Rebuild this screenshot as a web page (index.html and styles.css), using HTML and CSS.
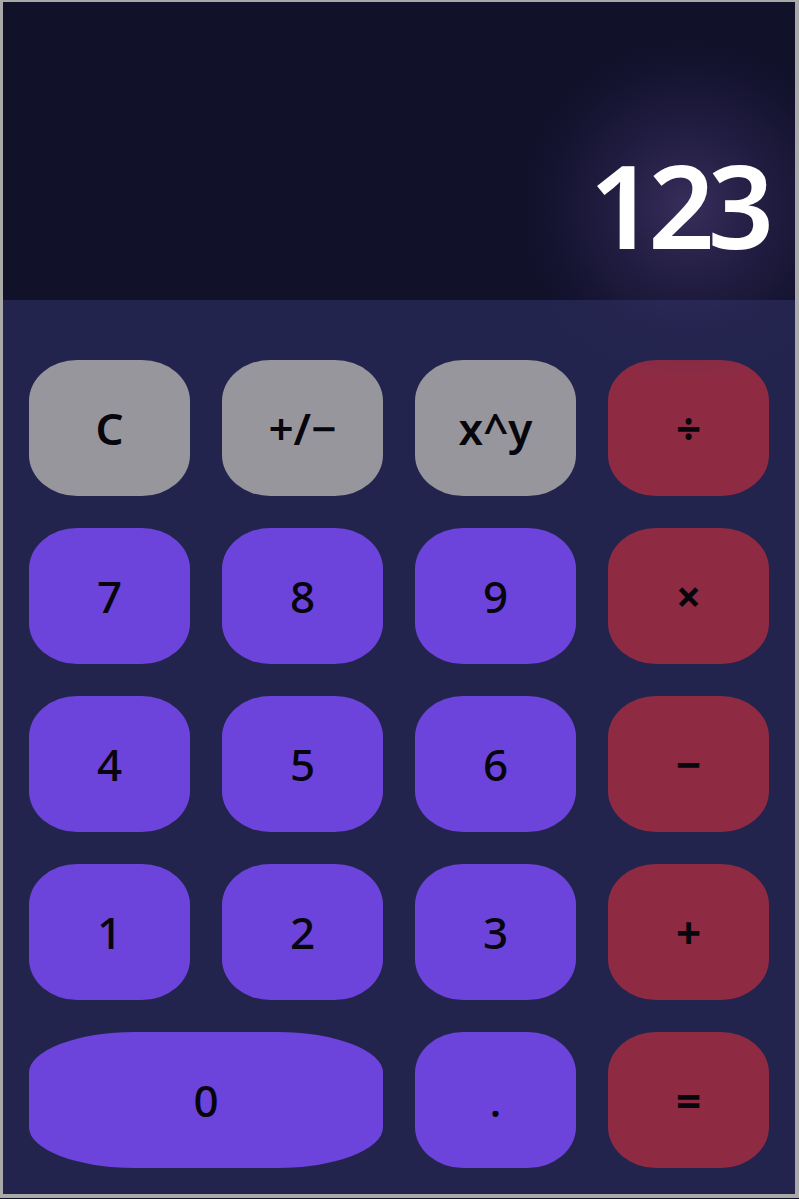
FILE: index.html
```html
<!DOCTYPE html>
<html lang="en">
<head>
<meta charset="utf-8">
<title>Calculator</title>
<link rel="stylesheet" href="styles.css">
</head>
<body>
<div class="app">
  <div class="display">
    <div class="glow"></div>
    <span class="value">123</span>
  </div>
  <div class="keypad">
    <button class="key fn">C</button>
    <button class="key fn">+/−</button>
    <button class="key fn">x^y</button>
    <button class="key op">÷</button>
    <button class="key num">7</button>
    <button class="key num">8</button>
    <button class="key num">9</button>
    <button class="key op">×</button>
    <button class="key num">4</button>
    <button class="key num">5</button>
    <button class="key num">6</button>
    <button class="key op">−</button>
    <button class="key num">1</button>
    <button class="key num">2</button>
    <button class="key num">3</button>
    <button class="key op">+</button>
    <button class="key num wide">0</button>
    <button class="key num">.</button>
    <button class="key op">=</button>
  </div>
</div>
</body>
</html>
```

FILE: styles.css
```css
html, body {
  margin: 0;
  padding: 0;
  background: #12112a;
}

.app {
  position: relative;
  width: 792px;
  border-style: solid;
  border-color: #a9a9a9;
  border-width: 2px 4px 4px 3px;
  font-family: "Noto Sans", "Open Sans", sans-serif;
  overflow: hidden;
}

.display {
  height: 298px;
  background: #12112a;
  display: flex;
  align-items: flex-end;
  justify-content: flex-end;
  padding: 0 28px 38px 0;
  box-sizing: border-box;
}

.glow {
  position: absolute;
  left: 510px;
  top: 30px;
  width: 350px;
  height: 350px;
  border-radius: 50%;
  background: radial-gradient(circle at center, rgba(72, 58, 112, 0.7) 0%, rgba(56, 46, 100, 0.42) 30%, rgba(40, 36, 88, 0.14) 55%, rgba(30, 28, 70, 0) 70%);
  pointer-events: none;
  z-index: 2;
}

.value {
  position: relative;
  z-index: 3;
  color: #ffffff;
  font-size: 116px;
  font-weight: 600;
  line-height: 1;
  letter-spacing: -7px;
}

.keypad {
  background: #23244d;
  display: grid;
  grid-template-columns: repeat(4, 161px);
  grid-auto-rows: 136px;
  gap: 32px;
  padding: 60px 26px 26px 26px;
}

.key {
  border: none;
  margin: 0;
  padding: 0;
  border-radius: 30%;
  font-family: "Noto Sans", "Open Sans", sans-serif;
  font-size: 44px;
  font-weight: 500;
  color: #07060c;
  display: flex;
  align-items: center;
  justify-content: center;
  line-height: 1;
}

.fn { background: #98969d; font-weight: 600; }
.num { background: #6d44db; }
.op { background: #8e2b43; font-weight: 700; }

.wide {
  grid-column: span 2;
}
```
